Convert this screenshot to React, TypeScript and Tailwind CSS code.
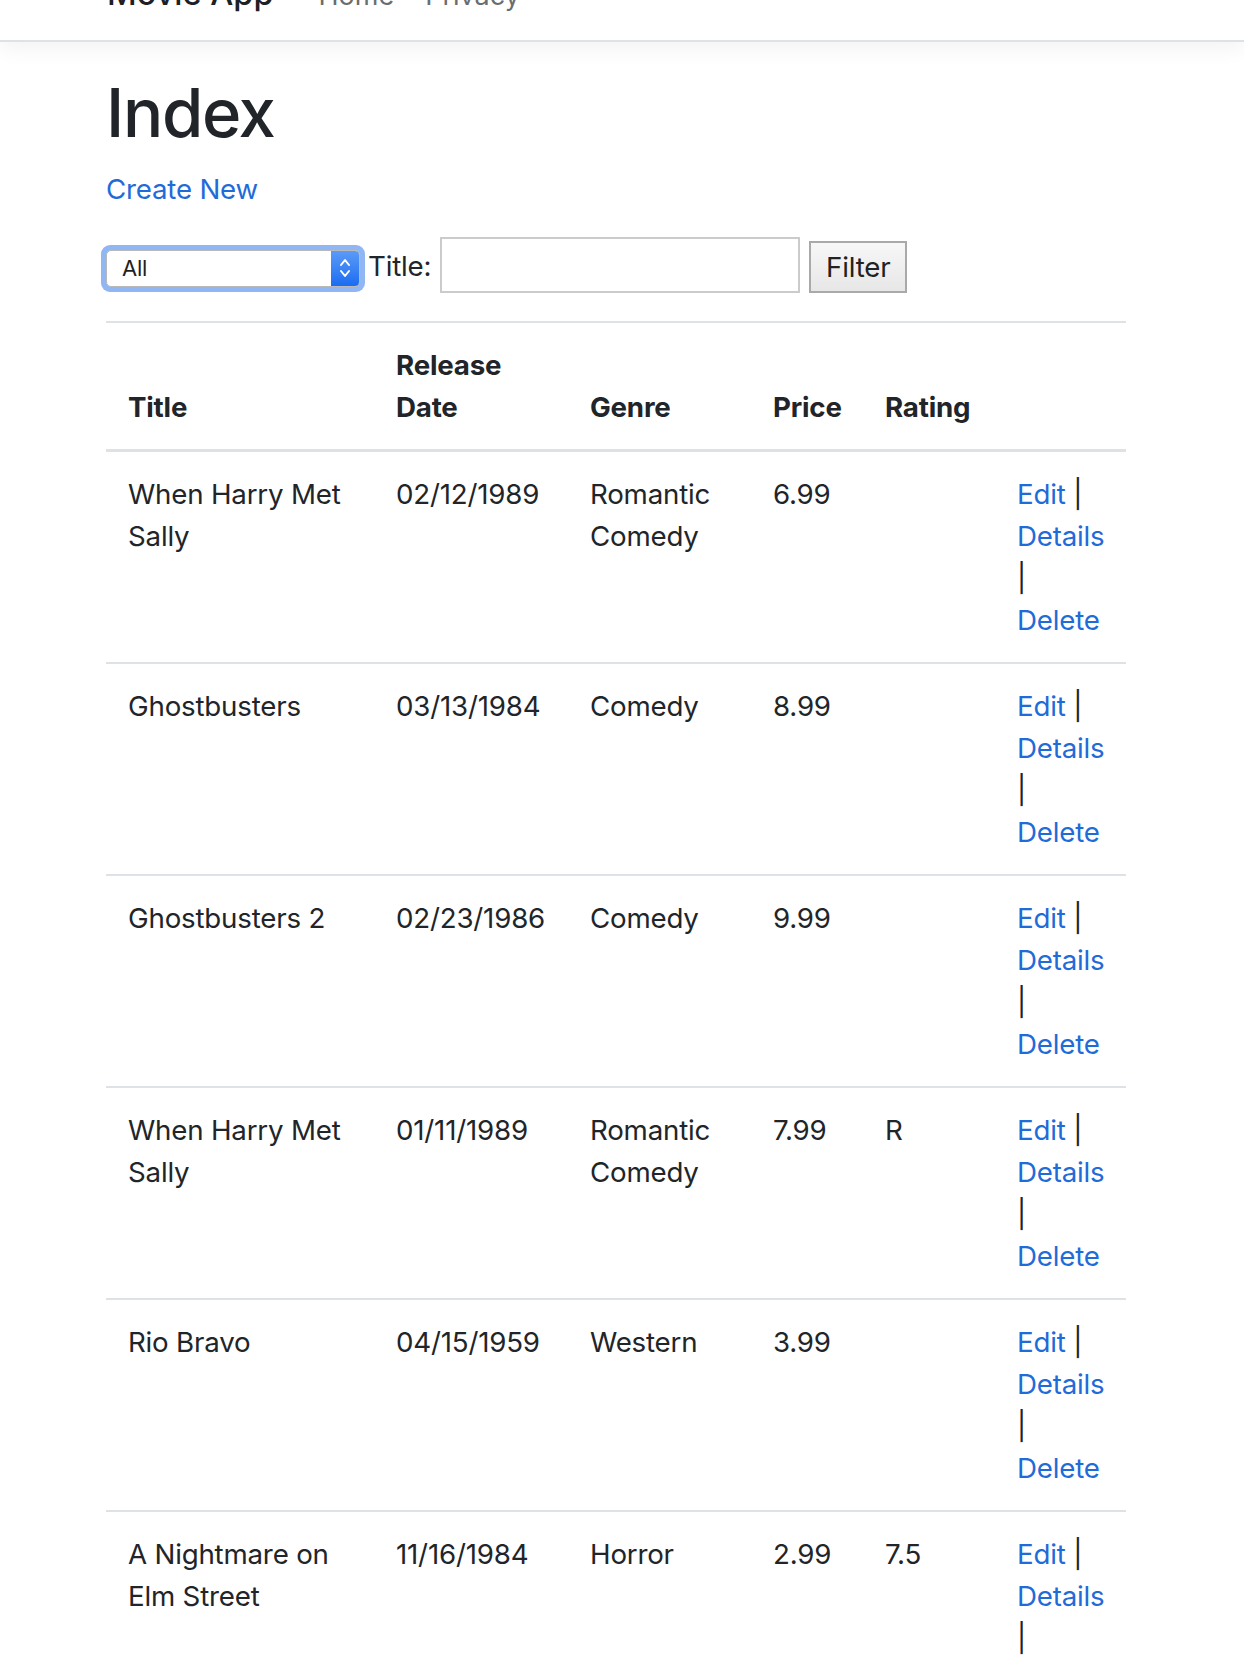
import React from 'react';

type Movie = {
  title: string;
  date: string;
  genre: string;
  price: string;
  rating: string;
};

const movies: Movie[] = [
  { title: 'When Harry Met Sally', date: '02/12/1989', genre: 'Romantic Comedy', price: '6.99', rating: '' },
  { title: 'Ghostbusters', date: '03/13/1984', genre: 'Comedy', price: '8.99', rating: '' },
  { title: 'Ghostbusters 2', date: '02/23/1986', genre: 'Comedy', price: '9.99', rating: '' },
  { title: 'When Harry Met Sally', date: '01/11/1989', genre: 'Romantic Comedy', price: '7.99', rating: 'R' },
  { title: 'Rio Bravo', date: '04/15/1959', genre: 'Western', price: '3.99', rating: '' },
  { title: 'A Nightmare on Elm Street', date: '11/16/1984', genre: 'Horror', price: '2.99', rating: '7.5' },
];

function GenreSelect() {
  // macOS-style select with focus ring
  return (
    <div className="rounded-[9px] bg-[#90b6f3] p-[5px]">
      <div className="flex h-[37px] w-[254px] overflow-hidden rounded-[5px] border border-[#b9b9b9] bg-white">
        <span className="flex flex-1 items-center pl-[15px] text-[22px] text-[#1f1f1f]">All</span>
        <span className="flex w-[28px] items-center justify-center bg-gradient-to-b from-[#5a9af8] to-[#1a6cf2]">
          <svg width="14" height="24" viewBox="0 0 14 24" fill="none" stroke="white" strokeWidth="2" strokeLinecap="round" strokeLinejoin="round">
            <path d="M3 9 L7 4 L11 9" />
            <path d="M3 15 L7 20 L11 15" />
          </svg>
        </span>
      </div>
    </div>
  );
}

export default function App() {
  return (
    <div className="min-h-screen bg-white font-['Inter',sans-serif] text-[#212529]">
      {/* navbar, scrolled mostly out of view */}
      <nav className="h-[42px] overflow-hidden border-b-2 border-[#dee2e6] bg-white shadow-[0_7px_21px_rgba(0,0,0,0.05)]">
        <div className="-mt-[26px] flex items-baseline pl-[107px] leading-[40px]">
          <span className="text-[32.5px] font-medium text-[#1d2024]">Movie App</span>
          <a href="#" className="ml-[45px] text-[27px] text-[#6a6c6f]">Home</a>
          <a href="#" className="ml-[31px] text-[27px] text-[#6a6c6f]">Privacy</a>
        </div>
      </nav>

      <main className="pl-[106px] pt-[29px] text-[27.7px] leading-[42px] tracking-[-0.2px]">
        <h1 className="mb-[14px] text-[67px] font-medium leading-[83px] tracking-[-0.02em]">Index</h1>
        <p className="mb-[27px]">
          <a href="#" className="text-[#1f6bd8]">Create New</a>
        </p>

        <form className="flex items-center" onSubmit={(e) => e.preventDefault()}>
          <div className="-ml-[5px] mt-[6px]">
            <GenreSelect />
          </div>
          <label className="ml-[3px] mt-[2px]">Title:</label>
          <input
            type="text"
            className="ml-[9px] h-[56px] w-[360px] border-2 border-[#cbcbcb] bg-white px-2 outline-none"
          />
          <button
            type="submit"
            className="ml-[9px] mt-[4px] h-[52px] w-[98px] border-2 border-[#a9a9a9] bg-gradient-to-b from-[#f7f7f7] to-[#e7e7e7] text-[27.7px] text-[#222]"
          >
            Filter
          </button>
        </form>

        <table className="mt-[28px] w-[1020px] table-fixed border-collapse">
          <colgroup>
            <col className="w-[268px]" />
            <col className="w-[194px]" />
            <col className="w-[183px]" />
            <col className="w-[112px]" />
            <col className="w-[132px]" />
            <col className="w-[131px]" />
          </colgroup>
          <thead>
            <tr className="border-t-2 border-[#dee2e6] text-left align-bottom font-bold">
              <th className="border-b-[3px] border-[#dee2e6] px-[22px] py-[21px]">Title</th>
              <th className="border-b-[3px] border-[#dee2e6] px-[22px] py-[21px]">Release Date</th>
              <th className="border-b-[3px] border-[#dee2e6] px-[22px] py-[21px]">Genre</th>
              <th className="border-b-[3px] border-[#dee2e6] px-[22px] py-[21px]">Price</th>
              <th className="border-b-[3px] border-[#dee2e6] px-[22px] py-[21px]">Rating</th>
              <th className="border-b-[3px] border-[#dee2e6] px-[22px] py-[21px]"></th>
            </tr>
          </thead>
          <tbody>
            {movies.map((m, i) => (
              <tr key={i} className="border-t-2 border-[#dee2e6] align-top first:border-t-0">
                <td className="px-[22px] py-[21px]">{m.title}</td>
                <td className="whitespace-nowrap px-[22px] py-[21px]">{m.date}</td>
                <td className="px-[22px] py-[21px]">{m.genre}</td>
                <td className="px-[22px] py-[21px]">{m.price}</td>
                <td className="px-[22px] py-[21px]">{m.rating}</td>
                <td className="px-[22px] py-[21px]">
                  <a href="#" className="text-[#1f6bd8]">Edit</a> |{' '}
                  <a href="#" className="text-[#1f6bd8]">Details</a> |{' '}
                  <a href="#" className="text-[#1f6bd8]">Delete</a>
                </td>
              </tr>
            ))}
          </tbody>
        </table>
      </main>
    </div>
  );
}
